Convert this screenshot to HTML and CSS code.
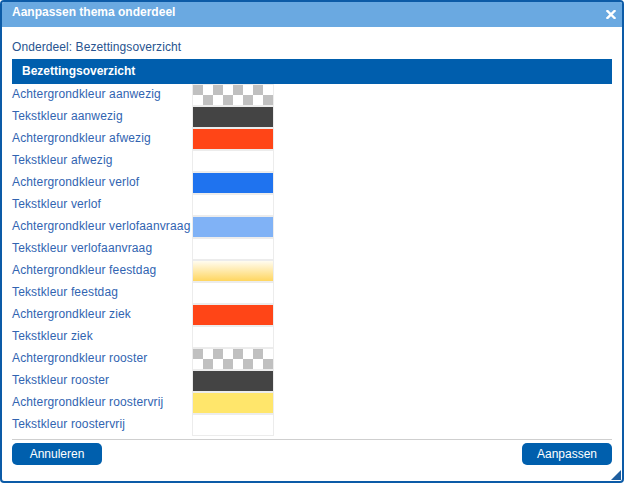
FILE: index.html
```html
<!DOCTYPE html>
<html lang="nl">
<head>
<meta charset="utf-8">
<title>Aanpassen thema onderdeel</title>
<link rel="stylesheet" href="styles.css">
</head>
<body>
<div class="dialog">
  <div class="titlebar">
    <span class="title">Aanpassen thema onderdeel</span>
    <svg class="close" width="10" height="9" viewBox="0 0 10 9"><path d="M1.5 1 L8.5 8 M8.5 1 L1.5 8" stroke="#fff" stroke-width="2.4" stroke-linecap="square"/></svg>
  </div>
  <div class="content">
    <div class="part">Onderdeel: Bezettingsoverzicht</div>
    <div class="header">Bezettingsoverzicht</div>
    <div class="rows">
      <div class="label">Achtergrondkleur aanwezig</div><div class="swatch"><div class="fill checker"></div></div>
      <div class="label">Tekstkleur aanwezig</div><div class="swatch"><div class="fill dark"></div></div>
      <div class="label">Achtergrondkleur afwezig</div><div class="swatch"><div class="fill red"></div></div>
      <div class="label">Tekstkleur afwezig</div><div class="swatch"><div class="fill white"></div></div>
      <div class="label">Achtergrondkleur verlof</div><div class="swatch"><div class="fill blue"></div></div>
      <div class="label">Tekstkleur verlof</div><div class="swatch"><div class="fill white"></div></div>
      <div class="label">Achtergrondkleur verlofaanvraag</div><div class="swatch"><div class="fill lightblue"></div></div>
      <div class="label">Tekstkleur verlofaanvraag</div><div class="swatch"><div class="fill white"></div></div>
      <div class="label">Achtergrondkleur feestdag</div><div class="swatch"><div class="fill holiday"></div></div>
      <div class="label">Tekstkleur feestdag</div><div class="swatch"><div class="fill white"></div></div>
      <div class="label">Achtergrondkleur ziek</div><div class="swatch"><div class="fill red"></div></div>
      <div class="label">Tekstkleur ziek</div><div class="swatch"><div class="fill white"></div></div>
      <div class="label">Achtergrondkleur rooster</div><div class="swatch"><div class="fill checker"></div></div>
      <div class="label">Tekstkleur rooster</div><div class="swatch"><div class="fill dark"></div></div>
      <div class="label">Achtergrondkleur roostervrij</div><div class="swatch"><div class="fill yellow"></div></div>
      <div class="label">Tekstkleur roostervrij</div><div class="swatch"><div class="fill white"></div></div>
    </div>
    <div class="separator"></div>
    <div class="footer">
      <button class="btn">Annuleren</button>
      <button class="btn">Aanpassen</button>
    </div>
  </div>
  <div class="grip"></div>
</div>
</body>
</html>
```

FILE: styles.css
```css
html, body {
  margin: 0;
  padding: 0;
  background: #ffffff;
}

body {
  font-family: "Liberation Sans", Arial, sans-serif;
  font-size: 12px;
}

.dialog {
  position: relative;
  width: 624px;
  height: 483px;
  box-sizing: border-box;
  border: 2px solid #0c5ba7;
  border-radius: 4px;
  background: #ffffff;
  display: flex;
  flex-direction: column;
  overflow: hidden;
}

.titlebar {
  height: 25px;
  box-sizing: border-box;
  background: #6aa9e1;
  padding: 0 6px 4px 10px;
  display: flex;
  align-items: center;
  justify-content: space-between;
  line-height: 21px;
}

.title {
  color: #ffffff;
  font-weight: bold;
  font-size: 12px;
}

.close {
  display: block;
  margin-top: 4px;
}

.content {
  padding: 12px 10px 0 10px;
  display: flex;
  flex-direction: column;
}

.part {
  color: #28548f;
  line-height: 16px;
  margin-bottom: 4px;
  letter-spacing: 0.08px;
}

.header {
  height: 25px;
  line-height: 25px;
  background: #005ead;
  color: #ffffff;
  font-weight: bold;
  padding-left: 10px;
}

.rows {
  display: grid;
  grid-template-columns: 180px 82px;
  grid-auto-rows: 22px;
}

.label {
  color: #3164b1;
  line-height: 20px;
  white-space: nowrap;
  letter-spacing: 0.14px;
}

.swatch {
  border: 1px solid #ececec;
  box-sizing: border-box;
  width: 82px;
  height: 22px;
}

.fill {
  width: 80px;
  height: 20px;
}

.checker {
  background: repeating-conic-gradient(from 90deg, #c0c0c0 0 25%, #ffffff 0 50%) 0 0 / 20px 20px;
}

.dark { background: #444444; }
.red { background: #ff4517; }
.white { background: #ffffff; }
.blue { background: #1f73ef; }
.lightblue { background: #80b2f6; }
.holiday { background: linear-gradient(#fffcf0, #ffd65f); }
.yellow { background: #ffe66b; }

.separator {
  margin-top: 3px;
  height: 1px;
  background: #cfcfcf;
}

.footer {
  margin-top: 3px;
  display: flex;
  justify-content: space-between;
}

.btn {
  width: 90px;
  height: 22px;
  padding: 0;
  border: none;
  border-radius: 5px;
  background: #005fad;
  color: #ffffff;
  font-family: "Liberation Sans", Arial, sans-serif;
  font-size: 12px;
  line-height: 22px;
  text-align: center;
}

.grip {
  position: absolute;
  right: 1px;
  bottom: 1px;
  width: 0;
  height: 0;
  border-style: solid;
  border-width: 0 0 10px 10px;
  border-color: transparent transparent #1e5e9f transparent;
}
```
